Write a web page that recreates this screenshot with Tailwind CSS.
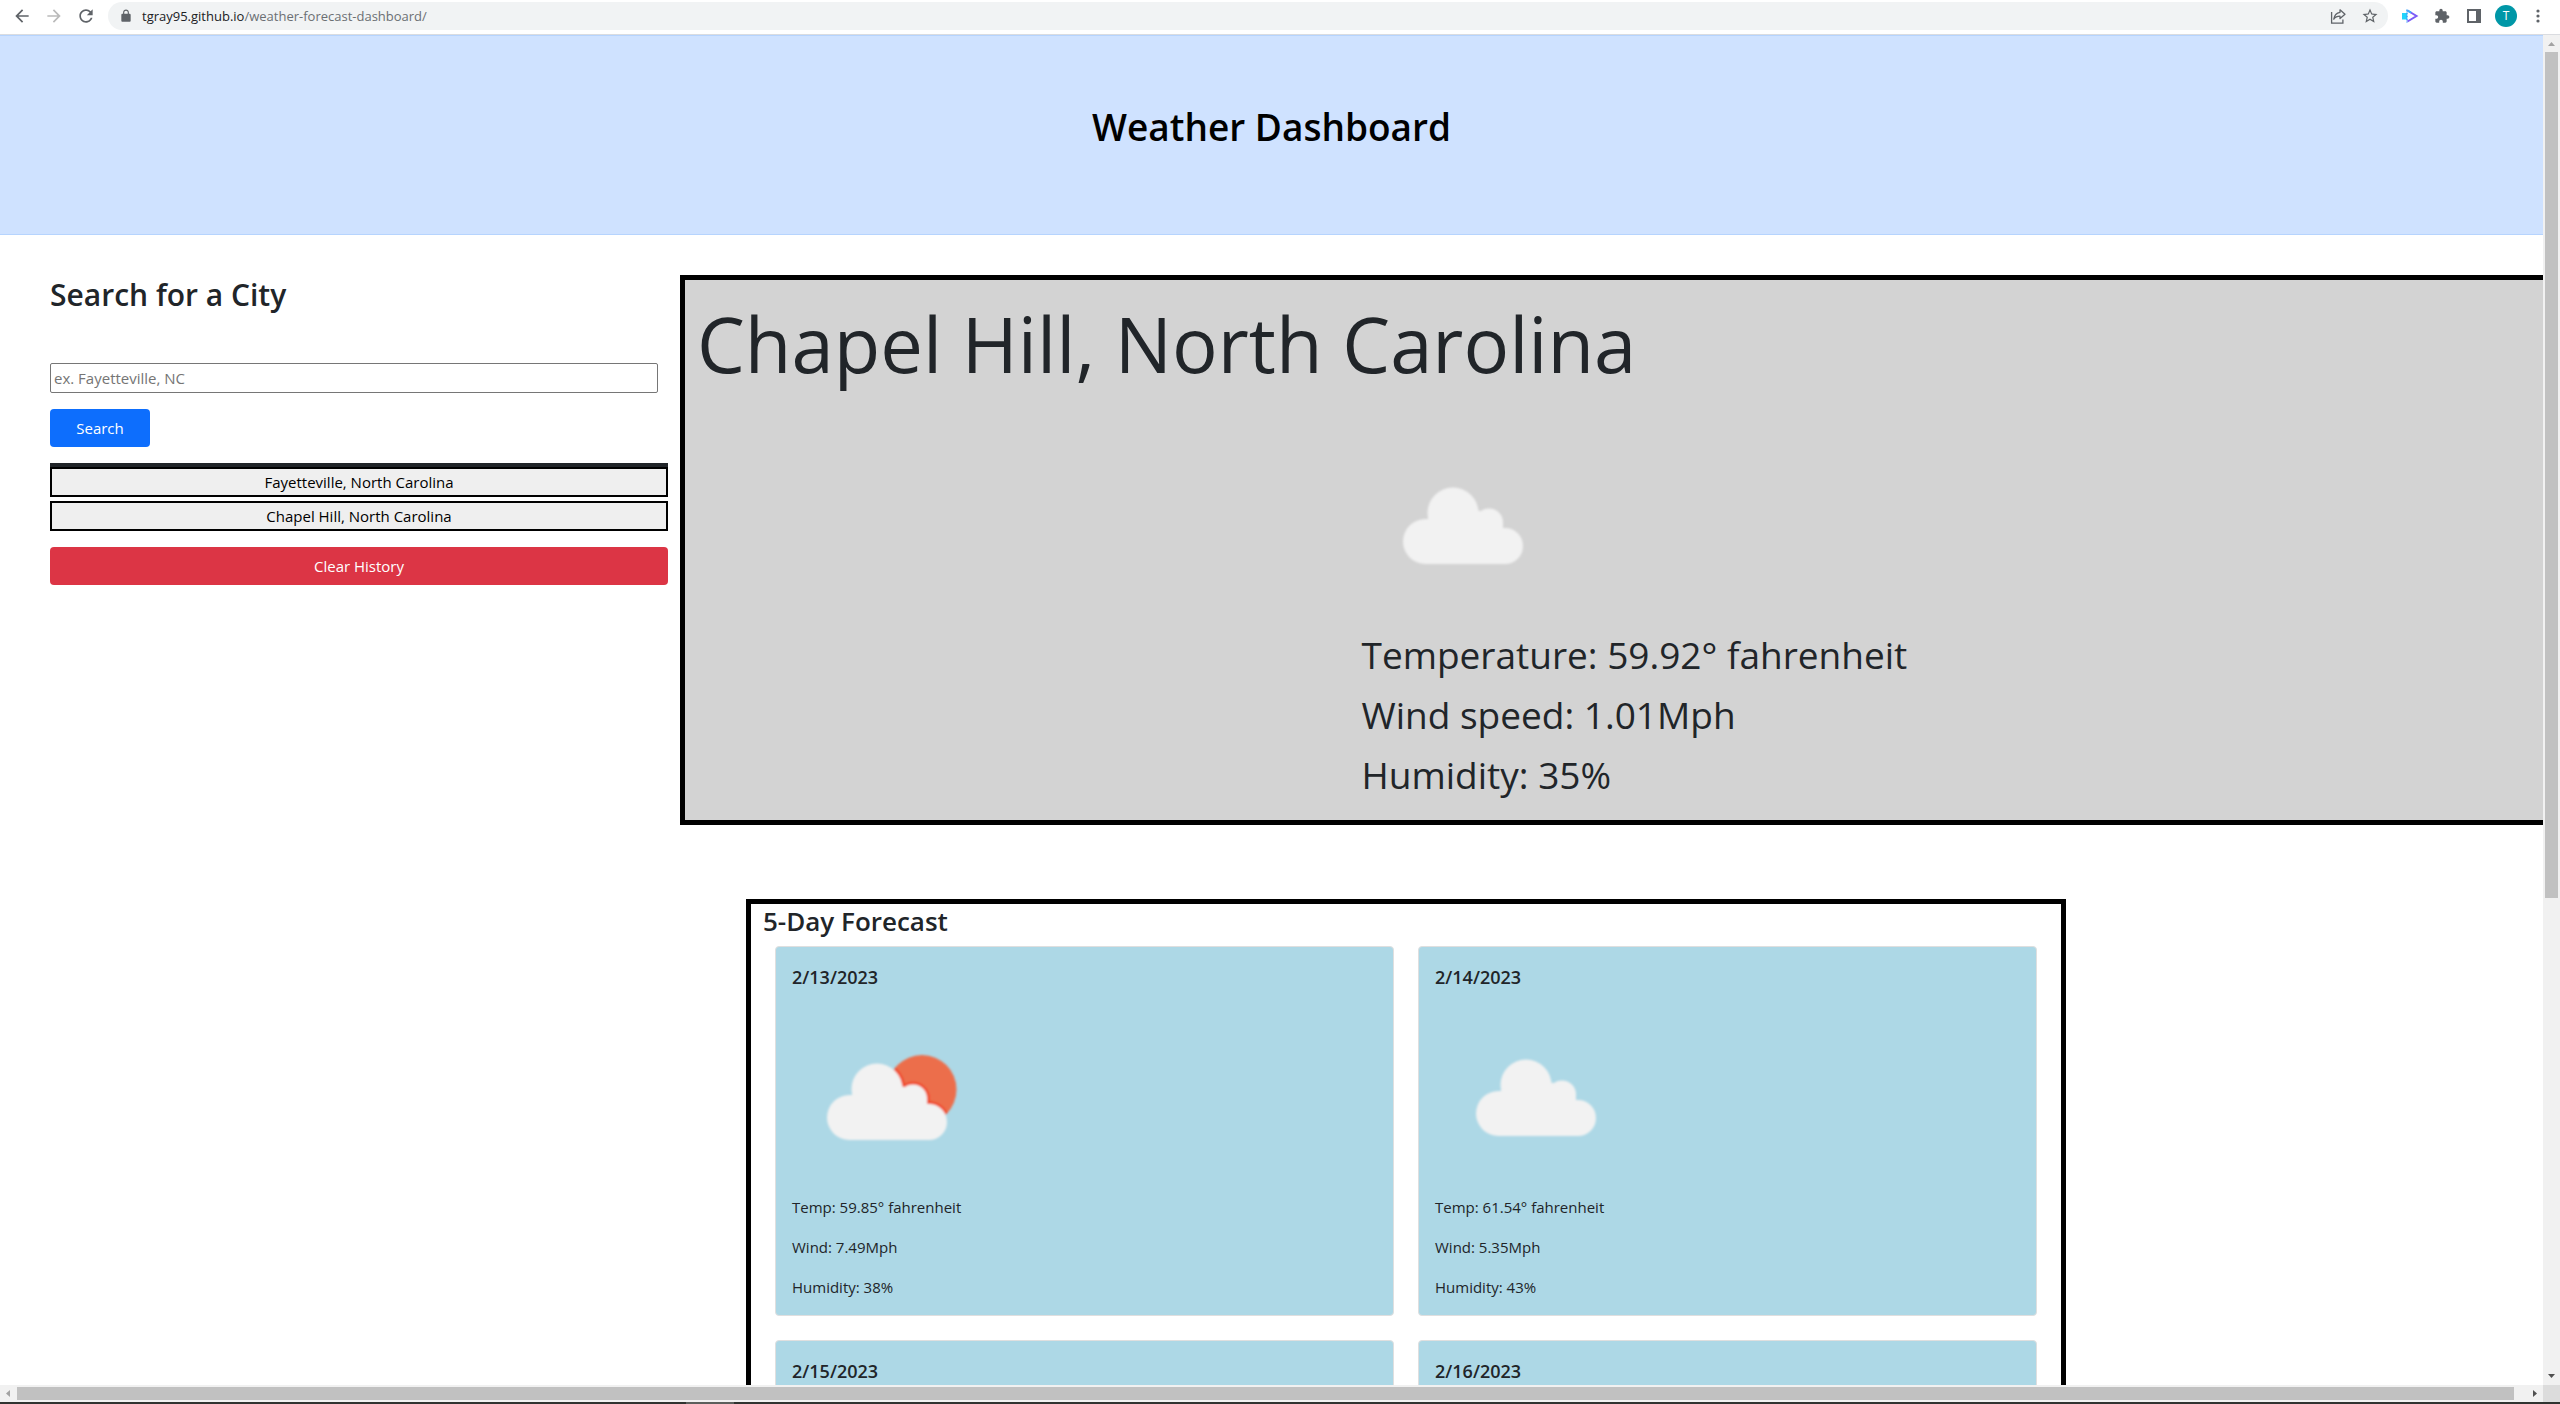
<!DOCTYPE html>
<html lang="en">
<head>
<meta charset="utf-8">
<title>Weather Dashboard</title>
<script src="https://cdn.jsdelivr.net/npm/@tailwindcss/browser@4"></script>
</head>
<body class="flex h-screen flex-col overflow-hidden bg-white font-['Open_Sans','Noto_Sans',sans-serif] text-[15px] leading-6 text-[#212529]">

<!-- shared cloud shape -->
<svg class="absolute size-0" aria-hidden="true">
  <defs>
    <g id="cloud">
      <circle cx="63.5" cy="116.500" r="22.5"/>
      <circle cx="91" cy="88" r="25.5"/>
      <circle cx="127" cy="97.500" r="14"/>
      <circle cx="143" cy="121" r="18"/>
      <path d="M63 94H66L78 84L112 84L118 86L127 97L141 97V103H144V139H63Z"/>
    </g>
    <filter id="soft" x="-10%" y="-10%" width="120%" height="120%"><feGaussianBlur stdDeviation="0.9"/></filter>
    <clipPath id="sunclip"><circle cx="130" cy="92.500" r="34.500"/></clipPath>
  </defs>
</svg>

<!-- browser toolbar -->
<div class="flex h-[35px] shrink-0 items-start border-b border-[#dadce0] bg-white pt-[2px] text-[#5f6368]">
  <div class="flex h-7 items-center gap-3 pr-3 pl-3">
    <button aria-label="Back" class="size-5"><svg viewBox="0 0 24 24" fill="currentColor" class="size-5"><path d="M20 11H7.830l5.590-5.590L12 4l-8 8 8 8 1.410-1.410L7.830 13H20z"/></svg></button>
    <button aria-label="Forward" class="size-5 text-[#bababa]"><svg viewBox="0 0 24 24" fill="currentColor" class="size-5"><path d="M12 4l-1.410 1.410L16.170 11H4v2h12.170l-5.580 5.590L12 20l8-8z"/></svg></button>
    <button aria-label="Reload" class="size-5"><svg viewBox="0 0 24 24" fill="currentColor" class="size-5"><path d="M17.650 6.350C16.200 4.900 14.210 4 12 4c-4.420 0-7.990 3.580-7.990 8s3.570 8 7.990 8c3.730 0 6.840-2.550 7.730-6h-2.080c-.82 2.330-3.040 4-5.650 4-3.310 0-6-2.690-6-6s2.690-6 6-6c1.660 0 3.140.69 4.220 1.780L13 11h7V4l-2.350 2.350z"/></svg></button>
  </div>
  <div class="flex h-7 flex-1 items-center rounded-full bg-[#f1f3f4] pr-2 pl-[11px]">
    <svg viewBox="0 0 24 24" fill="currentColor" class="size-[14px] shrink-0"><path d="M18 8h-1V6c0-2.760-2.240-5-5-5S7 3.240 7 6v2H6c-1.100 0-2 .9-2 2v10c0 1.100.9 2 2 2h12c1.100 0 2-.9 2-2V10c0-1.100-.9-2-2-2zM9 6c0-1.660 1.340-3 3-3s3 1.340 3 3v2H9V6z"/></svg>
    <div role="textbox" tabindex="0" aria-label="Address" class="ml-[9px] flex-1 text-[13px] leading-7 text-[#6b6f73]"><span class="text-[#202124]">tgray95.github.io</span>/weather-forecast-dashboard/</div>
    <div class="flex gap-3">
      <button aria-label="Share" class="size-5"><svg viewBox="0 0 20 20" fill="none" stroke="currentColor" stroke-width="1.300" class="size-5"><path d="M3.600 6v11.200h11.300v-3.700"/><path stroke-linejoin="round" d="M12 3.800 17 8.300 12 12.600V10.200C9 10.200 7.200 11 5.800 13.200 6.300 9.500 8.300 6.800 12 6.300z"/></svg></button>
      <button aria-label="Bookmark" class="flex size-5 items-center justify-center"><svg viewBox="0 0 24 24" fill="currentColor" class="size-[18px]"><path d="M22 9.240l-7.190-.62L12 2 9.190 8.630 2 9.240l5.460 4.730L5.820 21 12 17.270 18.180 21l-1.630-7.030L22 9.240zM12 15.400l-3.760 2.270 1-4.280-3.320-2.880 4.380-.38L12 6.100l1.710 4.040 4.380.38-3.320 2.880 1 4.280L12 15.400z"/></svg></button>
    </div>
  </div>
  <div class="flex h-7 items-center gap-3 pr-3 pl-3">
    <button aria-label="Recorder" class="size-5"><svg viewBox="0 0 20 20" class="size-5"><rect x="2" y="7" width="5" height="6.500" fill="#22d3fb"/><path d="M7 3.500v13" stroke="#35a3fb" stroke-width="1.500" stroke-dasharray="2 1"/><path d="M7.500 4.500 16.500 10 7.500 15.500" fill="none" stroke="#7c5cf6" stroke-width="2"/><path d="M7.500 4.500 11 6.600" stroke="#3db4fb" stroke-width="2"/></svg></button>
    <button aria-label="Extensions" class="flex size-5 items-center justify-center"><svg viewBox="0 0 24 24" fill="currentColor" class="size-4"><path d="M20.500 11H19V7c0-1.100-.9-2-2-2h-4V3.500C13 2.120 11.880 1 10.500 1S8 2.120 8 3.500V5H4c-1.100 0-1.990.9-1.990 2v3.800H3.500c1.490 0 2.700 1.210 2.700 2.700s-1.210 2.700-2.700 2.700H2V20c0 1.100.9 2 2 2h3.800v-1.500c0-1.490 1.210-2.700 2.700-2.700 1.490 0 2.700 1.210 2.700 2.700V22H17c1.100 0 2-.9 2-2v-4h1.500c1.380 0 2.500-1.120 2.500-2.500S21.880 11 20.500 11z"/></svg></button>
    <button aria-label="Side panel" class="size-5"><svg viewBox="0 0 20 20" class="size-5"><path fill="currentColor" fill-rule="evenodd" d="M3 3h14v14H3zM5 5v10h7V5z"/></svg></button>
    <button aria-label="Profile" class="-mx-px size-[22px] rounded-full bg-[#0097a7] text-center text-[12px] leading-[22px] text-white">T</button>
    <button aria-label="Menu" class="size-5"><svg viewBox="0 0 20 20" fill="currentColor" class="size-5"><circle cx="10" cy="5" r="1.600"/><circle cx="10" cy="10" r="1.600"/><circle cx="10" cy="15" r="1.600"/></svg></button>
  </div>
</div>

<!-- page viewport with vertical scrollbar -->
<div class="flex min-h-0 flex-1">
  <div class="min-w-0 flex-1 overflow-hidden">
    <header class="h-[200px] border-y border-[#b6d4fe] bg-[#cfe2ff] pt-[67px] text-center">
      <h1 class="text-[37px] leading-[48px] font-semibold text-black">Weather Dashboard</h1>
    </header>

    <div class="flex gap-3 pt-10 pl-[50px]">
      <aside class="w-[618px] shrink-0">
        <h2 class="mb-12 text-[30px] leading-10 font-semibold">Search for a City</h2>
        <form class="flex flex-col items-start gap-4">
          <input aria-label="City" type="text" placeholder="ex. Fayetteville, NC" class="h-[30px] w-[calc(100%-10px)] rounded-xs border border-[#767676] bg-white px-[3px] placeholder:text-[#757575]">
          <button type="button" class="h-[38px] w-[100px] rounded bg-[#0d6efd] text-white">Search</button>
        </form>
        <div class="mt-4 h-1 bg-[#212529]"></div>
        <div class="flex flex-col gap-1">
          <button class="h-[30px] border-2 border-black bg-[#efefef] text-black">Fayetteville, North Carolina</button>
          <button class="h-[30px] border-2 border-black bg-[#efefef] text-black">Chapel Hill, North Carolina</button>
        </div>
        <button class="mt-4 h-[38px] w-full rounded bg-[#dc3545] text-white">Clear History</button>
      </aside>

      <main class="min-w-0 flex-1">
        <section class="border-y-5 border-l-5 border-black bg-[#d3d3d3] pt-1 pb-[15px] pl-3">
          <h2 class="mb-[21px] text-[76px] leading-[120px]">Chapel Hill, North Carolina</h2>
          <div class="ml-[36%] text-[37px] leading-[60px]">
            <svg viewBox="0 0 200 200" class="size-[200px]" role="img" aria-label="Cloudy"><use href="#cloud" fill="#f2f2f2" filter="url(#soft)"/></svg>
            <p>Temperature: 59.92° fahrenheit</p>
            <p>Wind speed: 1.01Mph</p>
            <p>Humidity: 35%</p>
          </div>
        </section>

        <section class="mt-[74px] ml-[66px] max-w-[1320px] border-5 border-black px-3">
          <h3 class="mb-2 text-[26px] leading-[34px] font-semibold">5-Day Forecast</h3>
          <div class="grid grid-cols-2 gap-6 px-3">
            <article class="rounded-sm border border-[#dfdfdf] bg-[#add8e6] px-4 pt-[18px] pb-4">
              <h4 class="mb-2 text-[18px] leading-6 font-semibold">2/13/2023</h4>
              <svg viewBox="0 0 200 198" class="h-[198px] w-[200px]" role="img" aria-label="Partly cloudy">
                <g filter="url(#soft)">
                  <circle cx="130" cy="92.500" r="34.500" fill="#ec6e4c"/>
                  <g clip-path="url(#sunclip)"><use href="#cloud" x="-6" y="4" fill="#f04f32" stroke="#f04f32" stroke-width="6"/></g>
                  <use href="#cloud" x="-6" y="4" fill="#f2f2f2"/>
                </g>
              </svg>
              <div class="flex flex-col gap-4"><p>Temp: 59.85° fahrenheit</p><p>Wind: 7.49Mph</p><p>Humidity: 38%</p></div>
            </article>
            <article class="rounded-sm border border-[#dfdfdf] bg-[#add8e6] px-4 pt-[18px] pb-4">
              <h4 class="mb-2 text-[18px] leading-6 font-semibold">2/14/2023</h4>
              <svg viewBox="0 0 200 198" class="h-[198px] w-[200px]" role="img" aria-label="Cloudy"><use href="#cloud" fill="#f2f2f2" filter="url(#soft)"/></svg>
              <div class="flex flex-col gap-4"><p>Temp: 61.54° fahrenheit</p><p>Wind: 5.35Mph</p><p>Humidity: 43%</p></div>
            </article>
            <article class="h-[370px] rounded-sm border border-[#dfdfdf] bg-[#add8e6] px-4 pt-[18px] pb-4">
              <h4 class="text-[18px] leading-6 font-semibold">2/15/2023</h4>
            </article>
            <article class="h-[370px] rounded-sm border border-[#dfdfdf] bg-[#add8e6] px-4 pt-[18px] pb-4">
              <h4 class="text-[18px] leading-6 font-semibold">2/16/2023</h4>
            </article>
          </div>
        </section>
      </main>
    </div>
  </div>
  <div class="flex w-[17px] shrink-0 flex-col items-center bg-[#f1f1f1]">
    <svg viewBox="0 0 17 17" class="size-[17px] shrink-0" fill="#a3a3a3"><path d="M5 11h7L8.500 7z"/></svg>
    <div class="h-[62.7%] w-[13px] bg-[#c1c1c1]"></div>
    <svg viewBox="0 0 17 17" class="mt-auto size-[17px] shrink-0" fill="#505050"><path d="M5 6h7L8.500 10z"/></svg>
  </div>
</div>

<!-- horizontal scrollbar -->
<div class="flex h-[17px] shrink-0 items-center bg-[#f1f1f1]">
  <svg viewBox="0 0 17 17" class="size-[17px] shrink-0" fill="#a3a3a3"><path d="M10 5v7L6 8.500z"/></svg>
  <div class="mr-3 h-[13px] flex-1 bg-[#c1c1c1]"></div>
  <svg viewBox="0 0 17 17" class="size-[17px] shrink-0" fill="#505050"><path d="M7 5v7L11 8.500z"/></svg>
  <div class="size-[17px] shrink-0 bg-[#dcdcdc]"></div>
</div>
<div class="h-[2px] shrink-0 bg-[#303330] pl-[686px]"><div class="h-full w-12 bg-[#5c5f5c]"></div></div>
</body>
</html>
